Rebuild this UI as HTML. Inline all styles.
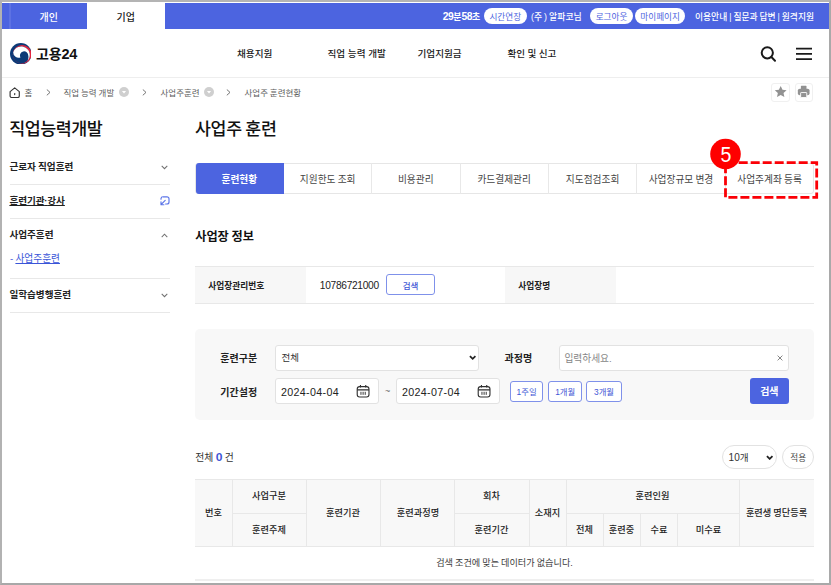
<!DOCTYPE html>
<html>
<head>
<meta charset="utf-8">
<title>고용24 - 사업주 훈련</title>
<style>
*{box-sizing:border-box;margin:0;padding:0}
html,body{width:831px;height:585px;overflow:hidden;background:#fff}
body{font-family:"Liberation Sans","Noto Sans CJK KR",sans-serif;color:#222;position:relative;font-size:10px}
.frame{position:absolute;left:0;top:0;width:831px;height:585px;border:2px solid #adadad;border-color:#b4b4b4 #a9a9a9 #a8a8a8 #b2b2b2;z-index:50;pointer-events:none}
.t{position:absolute;white-space:nowrap;line-height:1;font-family:"Liberation Sans","Noto Sans CJK KR",sans-serif;margin-top:0.09em;word-spacing:-0.054em}
.b{font-weight:700}
.m{font-weight:500}
.l{font-family:"Liberation Sans",sans-serif}
.abs{position:absolute}
.topbar{position:absolute;left:2px;top:3px;width:827px;height:26px;background:#4c64e0}
.tab1{position:absolute;left:9px;top:3px;width:78px;height:26px;border-left:2px solid #5d72e3;}
.tab2{position:absolute;left:87.2px;top:3px;width:77.5px;height:26px;background:#fff}
.pill{position:absolute;height:16.4px;padding-top:2.2px;border-radius:8.2px;background:#fff;color:#4c64e0;font-size:8.6px;line-height:14px;text-align:center;font-family:"Liberation Sans","Noto Sans CJK KR",sans-serif;white-space:nowrap}
.nav{top:48.16px;font-size:9.6px;color:#1a1a1a}
.bc{top:88.19px;font-size:8.5px;color:#5c5c5c}
.sb{left:9.4px;font-size:9.6px;color:#222}
.sl{left:10px;width:160px;background:#f2f2f2}
.tv{top:163.3px;height:31px}
.tb{top:174.14px;font-size:9.7px;color:#444;text-align:center}
.inp{border:1px solid #e2e2e2;border-radius:3px;background:#fff}
.pb{top:381px;height:21px;border:1px solid #7f91ea;border-radius:3px;background:#fff}
.pt{top:387.24px;font-size:8.4px;color:#3f57d6;text-align:center;font-weight:400}
.th{text-align:center;font-size:9.2px;color:#222}
.hline{position:absolute;height:1px;background:#e8e8e8}
.vline{position:absolute;width:1px;background:#e8e8e8}
</style>
</head>
<body>
<!-- top bar -->
<div class="topbar"></div>
<div class="tab1"></div>
<div class="tab2"></div>
<div class="t m" style="left:39.5px;top:12.06px;font-size:10px;color:#fff">개인</div>
<div class="t m" style="left:116.5px;top:12.06px;font-size:10px;color:#222">기업</div>
<div class="t b" style="left:442.7px;top:11.1px;font-size:8.9px;color:#fff"><span style="font-size:10.3px;letter-spacing:-0.45px">29</span>분<span style="font-size:10.3px;letter-spacing:-0.45px">58</span>초</div>
<div class="pill" style="left:484px;top:7.9px;width:42.5px">시간연장</div>
<div class="t m" style="left:531px;top:12.19px;font-size:8.9px;color:#fff">(주 ) 알파코님</div>
<div class="pill" style="left:590px;top:7.9px;width:43px">로그아웃</div>
<div class="pill" style="left:635.2px;top:7.9px;width:49.8px">마이페이지</div>
<div class="t m" style="left:695px;top:12.19px;font-size:8.75px;color:#fff">이용안내 | 질문과 답변 | 원격지원</div>

<!-- header -->
<svg class="abs" style="left:9.7px;top:42.8px" width="21.6" height="21.6" viewBox="0 0 21.4 21.4">
  <defs><clipPath id="co"><circle cx="10.7" cy="10.7" r="10.7"/></clipPath></defs>
  <circle cx="10.7" cy="10.7" r="10.7" fill="#0c3a77"/>
  <circle cx="12.1" cy="11.3" r="9.3" fill="#e2253f" clip-path="url(#co)"/>
  <circle cx="11.2" cy="11.8" r="8.4" fill="#0c3a77"/>
  <path d="M3.18 9.3 A8.4 8.4 0 1 1 17.14 17.74 A7 7 0 0 0 18.1 12.4 A4.1 4.1 0 1 0 10.35 14.27 A5.3 5.3 0 0 1 3.18 9.3Z" fill="#fff"/>
</svg>
<div class="t b" style="left:36px;top:45.76px;font-size:14px;color:#111;letter-spacing:-0.2px">고용<span class="l" style="font-size:14.5px">24</span></div>
<div class="t m nav" style="left:237px">채용지원</div>
<div class="t m nav" style="left:327.5px;word-spacing:0px">직업 능력 개발</div>
<div class="t m nav" style="left:417.5px">기업지원금</div>
<div class="t m nav" style="left:507.5px;word-spacing:-0.3px">확인 및 신고</div>
<svg class="abs" style="left:759px;top:45px" width="18" height="18" viewBox="0 0 18 18" fill="none" stroke="#1a1a1a" stroke-width="2" stroke-linecap="round"><circle cx="8.3" cy="7.8" r="5.6"/><path d="M12.4 12 L16 15.7"/></svg>
<svg class="abs" style="left:796px;top:46px" width="16" height="16" viewBox="0 0 16 16" fill="none" stroke="#1a1a1a" stroke-width="1.8"><path d="M0 2.55H16M0 7.8H16M0 13.05H16"/></svg>
<div class="hline" style="left:2px;top:77px;width:827px;background:#eeeeee"></div>

<!-- breadcrumb -->
<svg class="abs" style="left:9.4px;top:86.5px" width="11.4" height="11.4" viewBox="0 0 11.4 11.4" fill="none" stroke="#333" stroke-width="1.15" stroke-linejoin="round" stroke-linecap="round"><path d="M1.1 4.6 L5.7 0.9 L10.3 4.6 V8.9 A1.6 1.6 0 0 1 8.7 10.5 H2.7 A1.6 1.6 0 0 1 1.1 8.9Z"/><path d="M5.7 6.6V7.6"/></svg>
<div class="t bc" style="left:24.5px">홈</div>
<svg class="abs chv" style="left:46.2px;top:88.6px" width="5" height="7" viewBox="0 0 5 7" fill="none" stroke="#666" stroke-width="0.9"><path d="M0.8 0.5 L4 3.4 L0.8 6.3"/></svg>
<div class="t bc" style="left:63.5px">직업 능력 개발</div>
<svg class="abs" style="left:119px;top:87px" width="10" height="10" viewBox="0 0 10 10"><circle cx="5" cy="5" r="5" fill="#cfcfcf"/><path d="M2.9 3.9 H7.1 L5 6.6Z" fill="#fff"/></svg>
<svg class="abs chv" style="left:142.4px;top:88.6px" width="5" height="7" viewBox="0 0 5 7" fill="none" stroke="#666" stroke-width="0.9"><path d="M0.8 0.5 L4 3.4 L0.8 6.3"/></svg>
<div class="t bc" style="left:160.5px">사업주훈련</div>
<svg class="abs" style="left:203.7px;top:87px" width="10" height="10" viewBox="0 0 10 10"><circle cx="5" cy="5" r="5" fill="#cfcfcf"/><path d="M2.9 3.9 H7.1 L5 6.6Z" fill="#fff"/></svg>
<svg class="abs chv" style="left:226.4px;top:88.6px" width="5" height="7" viewBox="0 0 5 7" fill="none" stroke="#666" stroke-width="0.9"><path d="M0.8 0.5 L4 3.4 L0.8 6.3"/></svg>
<div class="t bc" style="left:244.5px">사업주 훈련현황</div>
<div class="abs" style="left:771.3px;top:83px;width:18.5px;height:18.5px;border-radius:3px;background:#fff;border:1px solid #f0f0f0"></div>
<div class="abs" style="left:794.8px;top:83px;width:18.5px;height:18.5px;border-radius:3px;background:#fff;border:1px solid #f0f0f0"></div>
<svg class="abs" style="left:774px;top:84.9px" width="13.4" height="13.4" viewBox="0 0 24 24"><path fill="#929292" d="M12 1.600l3.200 6.700 7.400 .9-5.500 5.100 1.500 7.300L12 18l-6.600 3.600 1.500-7.300-5.500-5.100 7.400-.9z"/></svg>
<svg class="abs" style="left:797.3px;top:85px" width="13.400" height="13.400" viewBox="0 0 24 24"><rect x="7" y="1.500" width="10" height="6" rx="1" fill="#929292"/><rect x="1.500" y="6.500" width="21" height="12" rx="3.500" fill="#929292"/><rect x="6.500" y="13.500" width="11" height="9" rx="1" fill="#929292" stroke="#fff" stroke-width="1.600"/></svg>

<!-- sidebar -->
<div class="t m" style="left:9.3px;top:119.39px;font-size:17.4px;color:#111;letter-spacing:-0.5px">직업능력개발</div>
<div class="t b sb" style="top:161.19px">근로자 직업훈련</div>
<svg class="abs" style="left:161px;top:164.8px" width="7" height="5.25" viewBox="0 0 8 6" fill="none" stroke="#707070" stroke-width="1.15"><path d="M0.8 1 L4 4.2 L7.2 1"/></svg>
<div class="hline sl" style="top:184px"></div>
<div class="t b sb" style="top:195.19px;text-decoration:underline">훈련기관<span class="l" style="margin:0 -0.35px">·</span>강사</div>
<svg class="abs" style="left:159.5px;top:196.1px" width="10" height="10" viewBox="0 0 10 10" fill="none" stroke="#5b74e8" stroke-width="1.15" stroke-linecap="round" stroke-linejoin="round"><path d="M1 3.2 V2.6 A2 2 0 0 1 3 0.800 H7 A2 2 0 0 1 9 2.800 V6 A2 2 0 0 1 7 8 H5.600"/><path d="M5.200 4.300 L1 8.600 M1 5.800 V8.700 H3.900"/></svg>
<div class="hline sl" style="top:218px"></div>
<div class="t b sb" style="top:229.19px">사업주훈련</div>
<svg class="abs" style="left:161px;top:232.8px" width="7" height="5.25" viewBox="0 0 8 6" fill="none" stroke="#707070" stroke-width="1.15"><path d="M0.8 4.6 L4 1.4 L7.2 4.6"/></svg>
<div class="t" style="left:10px;top:253.19px;font-size:9.7px;color:#3a55d8">- <span style="text-decoration:underline">사업주훈련</span></div>
<div class="hline sl" style="top:278px"></div>
<div class="t b sb" style="top:289.19px">일학습병행훈련</div>
<svg class="abs" style="left:161px;top:292.8px" width="7" height="5.25" viewBox="0 0 8 6" fill="none" stroke="#707070" stroke-width="1.15"><path d="M0.8 1 L4 4.2 L7.2 1"/></svg>
<div class="hline sl" style="top:312px"></div>

<!-- main -->
<div class="t m" style="left:195px;top:119.46px;font-size:17.3px;color:#111;letter-spacing:-0.3px">사업주 훈련</div>

<!-- tabs -->
<div class="abs" style="left:195.2px;top:163.3px;width:618.8px;height:31px;border:1px solid #e6e6e6;border-radius:3px"></div>
<div class="abs" style="left:195.6px;top:163.3px;width:88.4px;height:31px;background:#4c64e0;border-radius:3px 0 0 3px"></div>
<div class="vline tv" style="left:371.1px"></div>
<div class="vline tv" style="left:459.5px"></div>
<div class="vline tv" style="left:547.9px"></div>
<div class="vline tv" style="left:636.3px"></div>
<div class="vline tv" style="left:724.6px"></div>
<div class="t b tb" style="left:195.2px;width:88.3px;color:#fff">훈련현황</div>
<div class="t tb" style="left:283.8px;width:87.8px">지원한도 조회</div>
<div class="t tb" style="left:371.6px;width:88.4px">비용관리</div>
<div class="t tb" style="left:460px;width:88.4px">카드결제관리</div>
<div class="t tb" style="left:548.4px;width:88.4px">지도점검조회</div>
<div class="t tb" style="left:636.8px;width:88.3px">사업장규모 변경</div>
<div class="t tb" style="left:725.1px;width:88.9px">사업주계좌 등록</div>
<!-- annotation -->
<svg class="abs" style="left:700px;top:135px;z-index:5" width="125" height="68" viewBox="0 0 125 68">
  <rect x="25.5" y="27.6" width="91.2" height="34.7" fill="none" stroke="#fb0006" stroke-width="2.8" stroke-dasharray="9 3" stroke-dashoffset="10.8"/>
  <circle cx="25.500" cy="19" r="15.300" fill="#fe0000"/>
  <text x="29.1" y="26.800" text-anchor="middle" transform="scale(0.89 1)" font-family="Liberation Sans, sans-serif" font-weight="400" font-size="22" fill="#fff">5</text>
</svg>

<div class="t b" style="left:195.2px;top:229.86px;font-size:12.2px;color:#111">사업장 정보</div>

<!-- info table -->
<div class="hline" style="left:195.2px;top:266px;width:618.8px"></div>
<div class="hline" style="left:195.2px;top:303px;width:618.8px"></div>
<div class="abs" style="left:195.2px;top:267px;width:111px;height:36px;background:#f7f7f7"></div>
<div class="abs" style="left:504.5px;top:267px;width:111.3px;height:36px;background:#f7f7f7"></div>
<div class="t b" style="left:208.2px;top:281.19px;font-size:8.7px;color:#222">사업장관리번호</div>
<div class="t l" style="left:319.8px;top:280.06px;font-size:10.2px;letter-spacing:-0.3px;color:#222">10786721000</div>
<div class="abs" style="left:386px;top:274.2px;width:49.2px;height:21.3px;border:1px solid #7f91ea;border-radius:3px;background:#fff"></div>
<div class="t m" style="left:386px;width:49.2px;text-align:center;top:281.29px;font-size:8.5px;color:#3f57d6">검색</div>
<div class="t b" style="left:518.2px;top:281.19px;font-size:8.7px;color:#222">사업장명</div>

<!-- search box -->
<div class="abs" style="left:195.2px;top:329px;width:618.8px;height:90.5px;background:#f8f8f8;border-radius:5px"></div>
<div class="t b" style="left:220.3px;top:353.06px;font-size:10px;color:#222">훈련구분</div>
<div class="abs inp" style="left:275px;top:345px;width:204px;height:26px"></div>
<div class="t" style="left:281.5px;top:352.11px;font-size:9.5px;color:#333">전체</div>
<svg class="abs" style="left:468.9px;top:355px" width="7.4" height="5.550" viewBox="0 0 8 6" fill="none" stroke="#222" stroke-width="1.900"><path d="M1 1.200 L4 4.200 L7 1.200"/></svg>
<div class="t b" style="left:504.5px;top:353.06px;font-size:10px;color:#222">과정명</div>
<div class="abs inp" style="left:559px;top:345px;width:229.5px;height:26px"></div>
<div class="t" style="left:564.4px;top:353.11px;font-size:9.7px;color:#868686">입력하세요.</div>
<svg class="abs" style="left:776.5px;top:355px" width="6" height="6" viewBox="0 0 6 6" fill="none" stroke="#777" stroke-width="0.900"><path d="M0.600 0.600 L5.400 5.400 M5.400 0.600 L0.600 5.400"/></svg>

<div class="t b" style="left:220.3px;top:387.11px;font-size:10px;color:#222">기간설정</div>
<div class="abs inp" style="left:275px;top:378.4px;width:104px;height:26px"></div>
<div class="t l" style="left:281px;top:386.06px;font-size:10.7px;letter-spacing:0.33px;color:#222">2024-04-04</div>
<svg class="abs cal" style="left:356.1px;top:384.2px" width="14.200" height="14.200" viewBox="0 0 14 14" fill="none" stroke="#303030" stroke-width="1.1" stroke-linecap="round"><rect x="1.2" y="2.6" width="11.6" height="10.2" rx="2.4"/><path d="M1.2 5.800H12.800M4.400 0.900V3.400M9.600 0.900V3.400" stroke-linecap="butt"/><path d="M4.900 7.700V10.700M7 7.700V10.700M9.100 7.700V10.700" stroke-width="0.950" stroke-linecap="butt"/></svg>
<div class="t" style="left:385px;top:386.3px;font-size:9px;color:#6a6a6a">~</div>
<div class="abs inp" style="left:396.2px;top:378.4px;width:103.6px;height:26px"></div>
<div class="t l" style="left:402px;top:386.06px;font-size:10.7px;letter-spacing:0.33px;color:#222">2024-07-04</div>
<svg class="abs cal" style="left:477.300px;top:384.2px" width="14.200" height="14.200" viewBox="0 0 14 14" fill="none" stroke="#303030" stroke-width="1.1" stroke-linecap="round"><rect x="1.2" y="2.6" width="11.6" height="10.2" rx="2.4"/><path d="M1.2 5.800H12.800M4.400 0.900V3.400M9.600 0.900V3.400" stroke-linecap="butt"/><path d="M4.900 7.700V10.700M7 7.700V10.700M9.100 7.700V10.700" stroke-width="0.950" stroke-linecap="butt"/></svg>
<div class="abs pb" style="left:510px;width:33.3px"></div>
<div class="t pt" style="left:510px;width:33.3px"><span class="l">1</span>주일</div>
<div class="abs pb" style="left:548.2px;width:34px"></div>
<div class="t pt" style="left:548.2px;width:34px"><span class="l">1</span>개월</div>
<div class="abs pb" style="left:586.4px;width:35.3px"></div>
<div class="t pt" style="left:586.4px;width:35.3px"><span class="l">3</span>개월</div>
<div class="abs" style="left:750px;top:378.3px;width:38.5px;height:26.2px;border-radius:3px;background:#4c64e0"></div>
<div class="t b" style="left:750.2px;width:38.3px;text-align:center;top:386.11px;font-size:10px;color:#fff">검색</div>

<!-- count row -->
<div class="t" style="left:195.2px;top:451.11px;font-size:9.8px;color:#333">전체 <span class="b l" style="color:#3f57d6;font-size:10.8px;display:inline-block;transform:scaleX(1.12);margin:0 0.5px">0</span> 건</div>
<div class="abs" style="left:722.3px;top:445.3px;width:54.6px;height:23.8px;border:1px solid #e2e2e2;border-radius:12px;background:#fff"></div>
<div class="t" style="left:728.6px;top:452.16px;font-size:9.6px;color:#333"><span class="l" style="font-size:10px">10</span>개</div>
<svg class="abs" style="left:766.4px;top:454.8px" width="7.4" height="5.550" viewBox="0 0 8 6" fill="none" stroke="#222" stroke-width="1.900"><path d="M1 1.200 L4 4.200 L7 1.200"/></svg>
<div class="abs" style="left:781.8px;top:445.3px;width:32.4px;height:23.8px;border:1px solid #e2e2e2;border-radius:12px;background:#fff"></div>
<div class="t" style="left:782px;width:32.3px;text-align:center;top:453.21px;font-size:8.6px;color:#484848">적용</div>

<!-- table -->
<div class="abs" style="left:195.2px;top:479px;width:618.8px;height:68px;background:#f8f8f8"></div>
<div class="hline" style="left:195.2px;top:479px;width:618.8px"></div>
<div class="hline" style="left:195.2px;top:546px;width:618.8px"></div>
<div class="abs" style="left:195.2px;top:579px;width:618.8px;height:2px;background:#efefef"></div>
<div class="hline" style="left:232px;top:513px;width:74px"></div>
<div class="hline" style="left:454px;top:513px;width:75px"></div>
<div class="hline" style="left:566px;top:513px;width:174px"></div>
<div class="vline" style="left:232px;top:479px;height:68px"></div>
<div class="vline" style="left:306px;top:479px;height:68px"></div>
<div class="vline" style="left:380px;top:479px;height:68px"></div>
<div class="vline" style="left:454px;top:479px;height:68px"></div>
<div class="vline" style="left:529px;top:479px;height:68px"></div>
<div class="vline" style="left:566px;top:479px;height:68px"></div>
<div class="vline" style="left:739px;top:479px;height:68px"></div>
<div class="vline" style="left:603px;top:513px;height:34px"></div>
<div class="vline" style="left:640px;top:513px;height:34px"></div>
<div class="vline" style="left:677.4px;top:513px;height:34px"></div>
<div class="t m th" style="left:195px;width:37px;top:508.24px">번호</div>
<div class="t m th" style="left:232px;width:74px;top:491.24px">사업구분</div>
<div class="t m th" style="left:232px;width:74px;top:525.24px">훈련주제</div>
<div class="t m th" style="left:306px;width:74px;top:508.24px">훈련기관</div>
<div class="t m th" style="left:381px;width:74px;top:508.24px">훈련과정명</div>
<div class="t m th" style="left:454px;width:75px;top:491.24px">회차</div>
<div class="t m th" style="left:454px;width:75px;top:525.24px">훈련기간</div>
<div class="t m th" style="left:529px;width:37px;top:508.24px">소재지</div>
<div class="t m th" style="left:566px;width:173px;top:491.24px">훈련인원</div>
<div class="t m th" style="left:566px;width:37px;top:525.24px">전체</div>
<div class="t m th" style="left:603px;width:37px;top:525.24px">훈련중</div>
<div class="t m th" style="left:640px;width:38px;top:525.24px">수료</div>
<div class="t m th" style="left:678px;width:61px;top:525.24px">미수료</div>
<div class="t m th" style="left:739px;width:75px;top:508.24px">훈련생 명단등록</div>
<div class="t" style="left:195px;width:619px;text-align:center;top:558.21px;font-size:9.15px;color:#3c3c3c">검색 조건에 맞는 데이터가 없습니다.</div>

<div class="frame"></div>
</body>
</html>
